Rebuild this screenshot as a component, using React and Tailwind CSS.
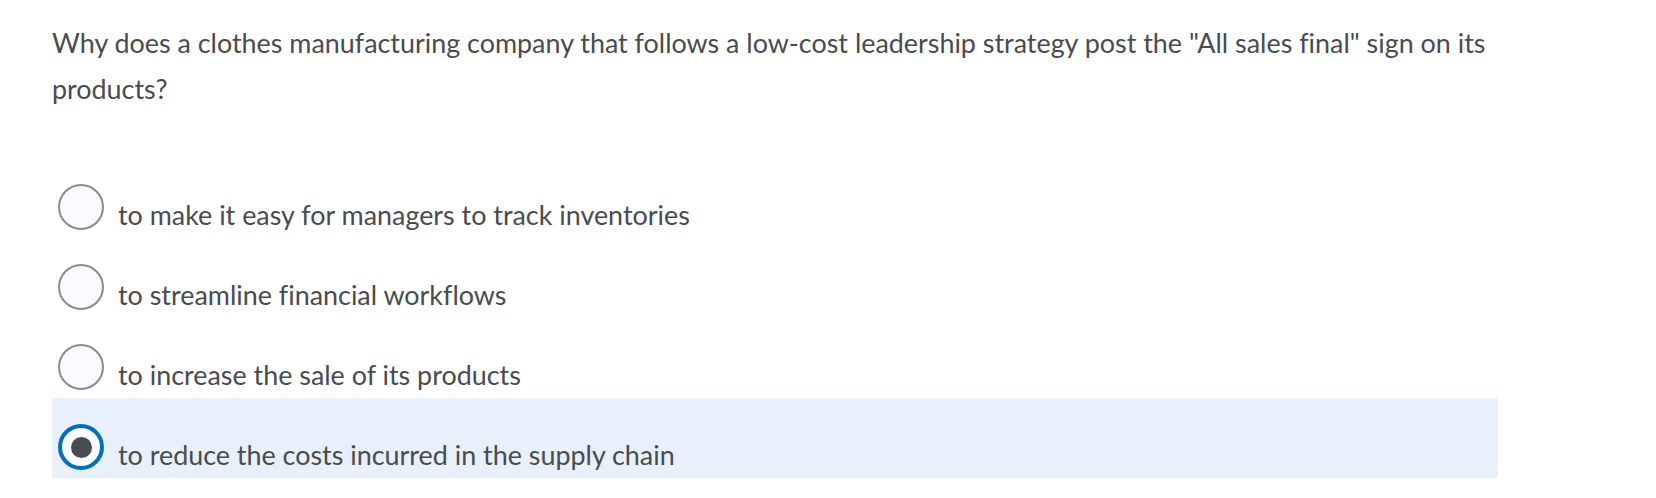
const options = [
  { id: "a", label: "to make it easy for managers to track inventories" },
  { id: "b", label: "to streamline financial workflows" },
  { id: "c", label: "to increase the sale of its products" },
  { id: "d", label: "to reduce the costs incurred in the supply chain" },
];

const Radio = ({ checked }) => {
  if (checked) {
    return (
      <span className="mt-[26px] flex h-[46px] w-[46px] shrink-0 items-center justify-center rounded-full border-[4px] border-[#006fbf] bg-[#f9fbff]">
        <span className="h-[21px] w-[21px] rounded-full bg-[#494c4e]" />
      </span>
    );
  }
  return (
    <span className="mt-[26px] h-[46px] w-[46px] shrink-0 rounded-full border-2 border-[#868c8f] bg-[#f9fbff]" />
  );
};

export default function App() {
  const selected = "d";

  return (
    <div
      className="min-h-[498px] bg-white pl-[52px] pt-[20px] text-[#494c4e] [font-variant-ligatures:none]"
      style={{ fontFamily: "Lato, 'Open Sans', sans-serif" }}
    >
      <p className="w-[1446px] text-[26.9px] leading-[46px]">
        Why does a clothes manufacturing company that follows a low-cost leadership strategy post the "All sales final" sign on its
        products?
      </p>
      <div className="mt-[46px] flex w-[1446px] flex-col">
        {options.map((opt) => (
          <label
            key={opt.id}
            className={`flex h-[80px] px-[6px] ${selected === opt.id ? "bg-[#e8f0fb]" : ""}`}
          >
            <Radio checked={selected === opt.id} />
            <span className="ml-[14px] mt-[42px] text-[26.9px] leading-[30px]">{opt.label}</span>
          </label>
        ))}
      </div>
    </div>
  );
}
